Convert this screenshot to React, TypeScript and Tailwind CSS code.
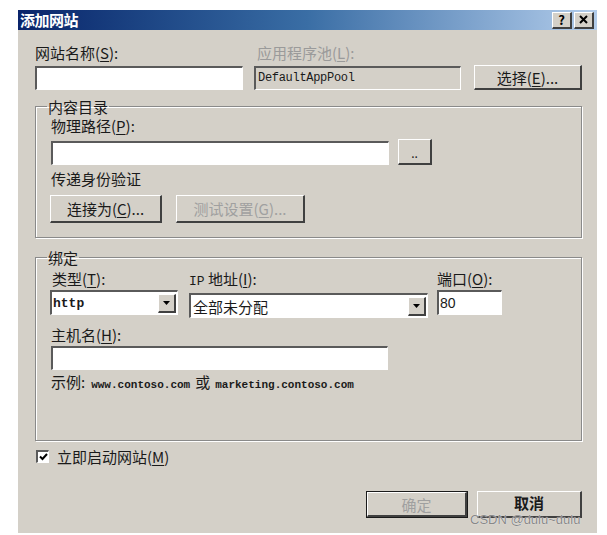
import React from "react";

const CJK = { fontFamily: '"Noto Sans CJK SC", "Noto Sans", sans-serif' };
const MONO = { fontFamily: '"Liberation Mono", "Noto Sans CJK SC", monospace' };

const sunken =
  "border-t-2 border-l-2 border-t-[#5a5a5a] border-l-[#5a5a5a] border-b border-r border-b-white border-r-white";
const raised =
  "bg-[#d4d0c8] border-t border-l border-t-white border-l-white border-b-2 border-r-2 border-b-[#404040] border-r-[#404040]";
const etched =
  "border border-[#8a8a8a] shadow-[inset_1px_1px_0_#ffffff,1px_1px_0_#ffffff]";

function U({ c }: { c: string }) {
  return <span className="underline underline-offset-2">{c}</span>;
}

function DropArrow() {
  return (
    <div className={`w-[18px] h-[19px] mr-[1px] flex items-center justify-center ${raised}`}>
      <svg width="7" height="4" viewBox="0 0 7 4">
        <path d="M0 0 H7 L3.5 4 Z" fill="#000" />
      </svg>
    </div>
  );
}

export default function App() {
  return (
    <div className="w-[607px] h-[535px] bg-white pl-[18px] pt-[10px] overflow-hidden relative" style={CJK}>
      <div className="w-[579px] h-[523px] flex flex-col bg-[#d4d0c8]">
        {/* title bar */}
        <div className="h-[20px] flex items-center justify-between pl-[2px] pr-[3px] bg-gradient-to-r from-[#0a246a] via-[#3a6ea5] to-[#b3cdeb]">
          <span className="text-white font-bold text-[15px] leading-[18px] tracking-[-0.5px]">添加网站</span>
          <div className="flex gap-[2px]">
            <div className={`w-[20px] h-[17px] flex items-center justify-center text-[13px] font-bold leading-none ${raised}`}>?</div>
            <div className={`w-[20px] h-[17px] flex items-center justify-center ${raised}`}>
              <svg width="9" height="9" viewBox="0 0 9 9">
                <path d="M1 1 L8 8 M8 1 L1 8" stroke="#000" strokeWidth="2" />
              </svg>
            </div>
          </div>
        </div>

        {/* body */}
        <div className="flex-1 flex flex-col pl-[17px] pr-[15px] text-[15px] leading-[17px] text-[#1a1a1a]">
          {/* row 1 */}
          <div className="flex items-end mt-[14px]">
            <div className="w-[208px] flex flex-col">
              <span>网站名称(<U c="S" />):</span>
              <div className={`h-[24px] mt-[5px] bg-white ${sunken}`} />
            </div>
            <div className="w-[207px] ml-[11px] flex flex-col">
              <span className="pl-[3px] text-[#9a9a9a]">应用程序池(<U c="L" />):</span>
              <div className={`h-[24px] mt-[5px] bg-[#d4d0c8] ${sunken} flex items-center pl-[2px]`}>
                <span className="text-[12px] tracking-[-0.3px]" style={MONO}>DefaultAppPool</span>
              </div>
            </div>
            <div className={`w-[108px] h-[25px] ml-[13px] flex items-center justify-center ${raised}`}>
              选择(<U c="E" />)...
            </div>
          </div>

          {/* 内容目录 */}
          <fieldset className={`mt-[8px] w-[547px] pl-[15px] pb-[14px] ${etched}`}>
            <legend className="-ml-[4px] px-[1px] leading-[17px]">内容目录</legend>
            <div className="mt-[2px]">物理路径(<U c="P" />):</div>
            <div className="flex items-end mt-[5px]">
              <div className={`w-[338px] h-[24px] bg-white ${sunken}`} />
              <div className={`w-[34px] h-[26px] ml-[9px] flex items-center justify-center text-[12px] leading-none ${raised}`}>
                <span className="mt-[2px]">..</span>
              </div>
            </div>
            <div className="mt-[5px]">传递身份验证</div>
            <div className="flex gap-[14px] mt-[8px] -ml-[1px]">
              <div className={`w-[112px] h-[28px] flex items-center justify-center ${raised}`}>
                连接为(<U c="C" />)...
              </div>
              <div className={`w-[129px] h-[28px] flex items-center justify-center text-[#a0a0a0] ${raised}`}>
                测试设置(<U c="G" />)...
              </div>
            </div>
          </fieldset>

          {/* 绑定 */}
          <fieldset className={`mt-[11px] w-[547px] h-[192px] pl-[15px] ${etched}`}>
            <legend className="-ml-[4px] px-[1px] leading-[17px]">绑定</legend>
            <div className="flex mt-[4px]">
              <div className="w-[128px] flex flex-col -ml-[1px]">
                <span className="pl-[2px]">类型(<U c="T" />):</span>
                <div className={`h-[25px] mt-[3px] bg-white ${sunken} flex items-center justify-between`}>
                  <span className="pl-[1px] text-[13px] font-bold" style={MONO}>http</span>
                  <DropArrow />
                </div>
              </div>
              <div className="w-[239px] ml-[11px] flex flex-col">
                <span><span style={MONO} className="text-[13px]">IP</span> 地址(<U c="I" />):</span>
                <div className={`h-[25px] mt-[3px] bg-white ${sunken} flex items-center justify-between`}>
                  <span className="pl-[2px] text-[15px]">全部未分配</span>
                  <DropArrow />
                </div>
              </div>
              <div className="w-[65px] ml-[9px] flex flex-col">
                <span>端口(<U c="O" />):</span>
                <div className={`h-[25px] mt-[3px] bg-white ${sunken} flex items-center`}>
                  <span className="pl-[1px] text-[14px]" style={{ fontFamily: '"Liberation Sans", sans-serif' }}>80</span>
                </div>
              </div>
            </div>
            <div className="mt-[8px]">主机名(<U c="H" />):</div>
            <div className={`w-[337px] h-[24px] mt-[3px] bg-white ${sunken}`} />
            <div className="mt-[3px] flex items-baseline">
              <span>示例:</span>
              <span className="ml-[6px] text-[11px] font-bold" style={MONO}>www.contoso.com</span>
              <span className="mx-[5px]">或</span>
              <span className="text-[11px] font-bold" style={MONO}>marketing.contoso.com</span>
            </div>
          </fieldset>

          {/* checkbox */}
          <div className="flex items-center mt-[7px] ml-[1px]">
            <div className={`w-[13px] h-[13px] bg-white ${sunken} flex items-center justify-center`}>
              <svg width="9" height="8" viewBox="0 0 9 8">
                <path d="M1 3.5 L3.5 6 L8 1" stroke="#000" strokeWidth="2" fill="none" />
              </svg>
            </div>
            <span className="ml-[8px]">立即启动网站(<U c="M" />)</span>
          </div>

          {/* buttons */}
          <div className="flex justify-end gap-[9px] mt-[26px]">
            <div className="w-[102px] h-[27px] border border-[#1a1a1a] flex">
              <div className={`flex-1 flex items-center justify-center text-[#a0a0a0] ${raised}`}>确定</div>
            </div>
            <div className={`w-[105px] h-[27px] flex items-start justify-center pt-[3px] font-bold leading-[15px] ${raised}`}>取消</div>
          </div>
        </div>
      </div>
      <div
        className="absolute left-[470px] top-[513px] text-[13px] leading-[13px] text-[#888888]"
        style={{ fontFamily: '"Liberation Sans", sans-serif', textShadow: "0 0 1px #fff" }}
      >
        CSDN @dulu~dulu
      </div>
    </div>
  );
}
